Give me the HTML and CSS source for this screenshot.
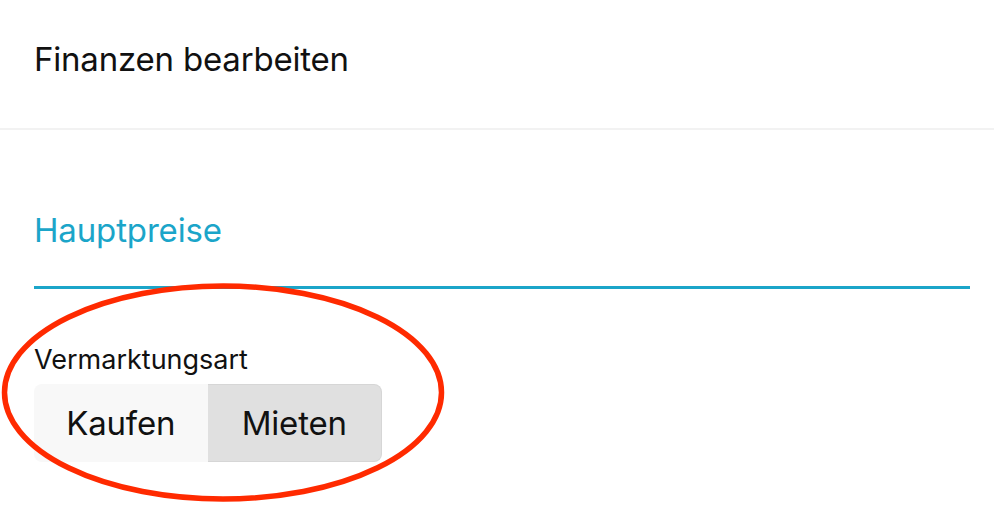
FILE: index.html
```html
<!DOCTYPE html>
<html lang="de">
<head>
<meta charset="utf-8">
<link rel="stylesheet" href="styles.css">
</head>
<body>
<header class="header">
  <h1 class="title">Finanzen bearbeiten</h1>
</header>
<main class="content">
  <h2 class="section-title">Hauptpreise</h2>
  <div class="field">
    <label class="label">Vermarktungsart</label>
    <div class="segmented">
      <button class="seg">Kaufen</button>
      <button class="seg active">Mieten</button>
    </div>
    <svg class="annotation" width="450" height="226" viewBox="0 0 450 226">
      <ellipse cx="223" cy="109.5" rx="218.5" ry="106.5" fill="none" stroke="#ff2a00" stroke-width="5.5"/>
    </svg>
  </div>
</main>
</body>
</html>
```
FILE: styles.css
```css
* { box-sizing: border-box; }
html, body { margin: 0; padding: 0; background: #fff; }
body {
  font-family: Inter, "Noto Sans", sans-serif;
  color: #111;
  width: 994px;
  height: 518px;
  overflow: hidden;
}
.header {
  height: 130px;
  border-bottom: 2px solid #f2f2f2;
  padding: 0 34px;
  display: flex;
  align-items: center;
}
.title {
  margin: 0;
  font-weight: 400;
  font-size: 33px;
  letter-spacing: -0.2px;
  line-height: 1;
  padding-bottom: 10px;
}
.content {
  padding: 0 24px 0 34px;
}
.section-title {
  margin: 0;
  font-weight: 400;
  font-size: 33px;
  color: #1ba5c9;
  line-height: 40px;
  padding-top: 80px;
  padding-bottom: 36px;
  border-bottom: 3px solid #1ba5c9;
  letter-spacing: -0.15px;
}
.field {
  position: relative;
  padding-top: 56px;
}
.label {
  display: block;
  font-size: 27px;
  line-height: 30px;
  letter-spacing: 0;
}
.segmented {
  margin-top: 9px;
  display: flex;
  width: 348px;
  height: 78px;
}
.seg {
  flex: 1;
  border: none;
  font-family: inherit;
  font-size: 33px;
  color: #111;
  background: #f8f8f8;
  padding: 0;
  letter-spacing: -0.2px;
}
.seg:first-child { border-radius: 8px 0 0 8px; }
.seg.active {
  background: #e0e0e0;
  border: 1px solid #d6d6d6;
  border-left: none;
  border-radius: 0 8px 8px 0;
}
.annotation {
  position: absolute;
  left: -34px;
  top: -6px;
}
```
